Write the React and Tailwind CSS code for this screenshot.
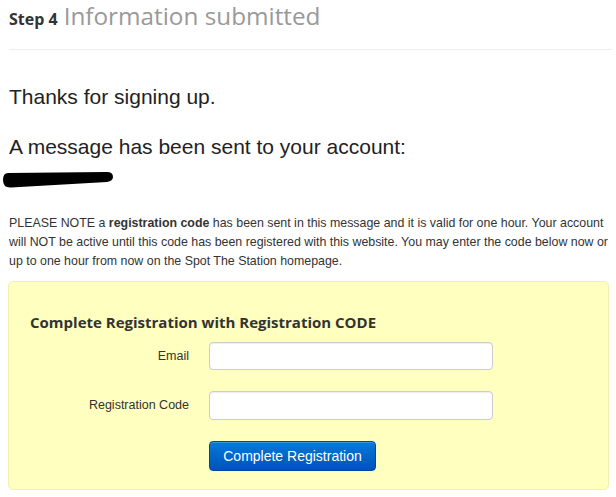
export default function App() {
  return (
    <div className="w-[616px] h-[497px] bg-white overflow-hidden pl-[9px] pr-[4px] text-[#333]" style={{ fontFamily: '"Liberation Sans", Arial, sans-serif' }}>
      <div className="h-[50px] border-b border-[#eee] pt-0 flex items-baseline gap-[6px]" style={{ fontFamily: '"Open Sans", sans-serif' }}>
        <span className="text-[16px] font-bold text-[#333]">Step 4</span>
        <span className="text-[24.3px] leading-[32px] text-[#999]">Information submitted</span>
      </div>
      <p className="mt-[35px] text-[21px] leading-[24px] text-[#222]">Thanks for signing up.</p>
      <p className="mt-[26px] text-[21px] leading-[24px] text-[#222]">A message has been sent to your account:</p>
      <div className="mt-[13px] -ml-[7px] h-[15px]">
        <svg width="112" height="16" viewBox="0 0 112 16">
          <path d="M6 1 L105 0 Q111 0 111 5 Q111 9 105 10 L9 15.5 Q1 16 1 8 Q1 1 6 1 Z" fill="#000" />
        </svg>
      </div>
      <p className="mt-[27px] text-[12.4px] leading-[19px] text-[#333] whitespace-nowrap">
        PLEASE NOTE a <b>registration code</b> has been sent in this message and it is valid for one hour. Your account
        <br />
        will NOT be active until this code has been registered with this website. You may enter the code below now or
        <br />
        up to one hour from now on the Spot The Station homepage.
      </p>
      <div className="mt-[10px] -ml-[1px] w-[601px] h-[209px] bg-[#ffffc0] border border-[#f0f0b4] rounded-[5px] pt-[30px] pl-[21px] pb-[18px]">
        <h2 className="text-[15px] leading-[20px] font-bold text-[#333]" style={{ fontFamily: '"Open Sans", sans-serif' }}>Complete Registration with Registration CODE</h2>
        <div className="mt-[10px] flex items-center gap-[20px]">
          <label className="w-[159px] text-right text-[12.5px] text-[#333]">Email</label>
          <input type="text" className="w-[284px] h-[28px] bg-white border border-[#ccc] rounded-[4px] shadow-[inset_0_1px_1px_rgba(0,0,0,0.075)] outline-none" />
        </div>
        <div className="mt-[21px] flex items-center gap-[20px]">
          <label className="w-[159px] text-right text-[12.5px] text-[#333]">Registration Code</label>
          <input type="text" className="w-[284px] h-[29px] bg-white border border-[#ccc] rounded-[4px] shadow-[inset_0_1px_1px_rgba(0,0,0,0.075)] outline-none" />
        </div>
        <div className="mt-[21px] pl-[179px]">
          <button className="w-[167px] h-[30px] rounded-[4px] border border-[#0046a6] bg-gradient-to-b from-[#0a7ad8] to-[#0051bd] text-white text-[14px] shadow-[inset_0_1px_0_rgba(255,255,255,0.2)]">Complete Registration</button>
        </div>
      </div>
    </div>
  );
}
